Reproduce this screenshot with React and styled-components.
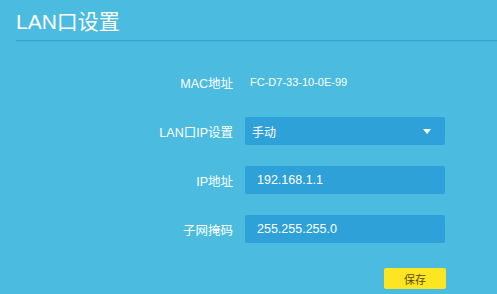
import styled, { createGlobalStyle } from "styled-components";

const GlobalStyle = createGlobalStyle`
  html, body {
    margin: 0;
    padding: 0;
    background: #4bbce0;
  }
  body {
    font-family: "Liberation Sans", "Noto Sans CJK SC", sans-serif;
    color: #fff;
  }
`;

const Page = styled.div`
  width: 497px;
  height: 294px;
  background: #4bbce0;
  overflow: hidden;
`;

const Header = styled.div`
  margin-left: 16px;
  height: 40px;
  display: flex;
  align-items: center;
  border-bottom: 1px solid #36a5d1;
  box-shadow: 0 1px 0 #44b3dc;
`;

const Title = styled.h1`
  margin: 0;
  font-size: 21px;
  font-weight: normal;
  color: #fff;
`;

const Form = styled.div`
  display: flex;
  flex-direction: column;
  gap: 21px;
  padding-top: 27px;
`;

const Row = styled.div`
  display: flex;
  align-items: center;
  height: 28px;
`;

const Label = styled.div`
  width: 233px;
  text-align: right;
  font-size: 12.5px;
  color: #fff;
  margin-right: 12px;
`;

const Static = styled.div`
  font-size: 11px;
  padding-left: 5px;
  color: #fff;
`;

const Box = styled.div`
  width: 200px;
  height: 28px;
  box-sizing: border-box;
  background: #2ea1d8;
  border-radius: 2px;
  display: flex;
  align-items: center;
  justify-content: space-between;
  padding: 0 14px 0 ${(p) => p.$pad || 12}px;
  font-size: ${(p) => p.$size || 12.5}px;
  color: #fff;
`;

const Arrow = styled.span`
  width: 0;
  height: 0;
  border-left: 4px solid transparent;
  border-right: 4px solid transparent;
  border-top: 5px solid #fff;
`;

const Actions = styled.div`
  display: flex;
  justify-content: flex-end;
  width: 446px;
  margin-top: 4px;
`;

const SaveButton = styled.button`
  width: 62px;
  height: 21px;
  border: none;
  border-radius: 2px;
  background: #fde521;
  color: #5a4c0a;
  font-family: "Noto Sans CJK SC", sans-serif;
  font-size: 11px;
  padding: 0;
`;

export default function App() {
  return (
    <Page>
      <GlobalStyle />
      <Header>
        <Title>LAN口设置</Title>
      </Header>
      <Form>
        <Row>
          <Label>MAC地址</Label>
          <Static>FC-D7-33-10-0E-99</Static>
        </Row>
        <Row>
          <Label>LAN口IP设置</Label>
          <Box $pad={7} $size={12}>
            <span>手动</span>
            <Arrow />
          </Box>
        </Row>
        <Row>
          <Label>IP地址</Label>
          <Box>192.168.1.1</Box>
        </Row>
        <Row>
          <Label>子网掩码</Label>
          <Box>255.255.255.0</Box>
        </Row>
        <Actions>
          <SaveButton>保存</SaveButton>
        </Actions>
      </Form>
    </Page>
  );
}
